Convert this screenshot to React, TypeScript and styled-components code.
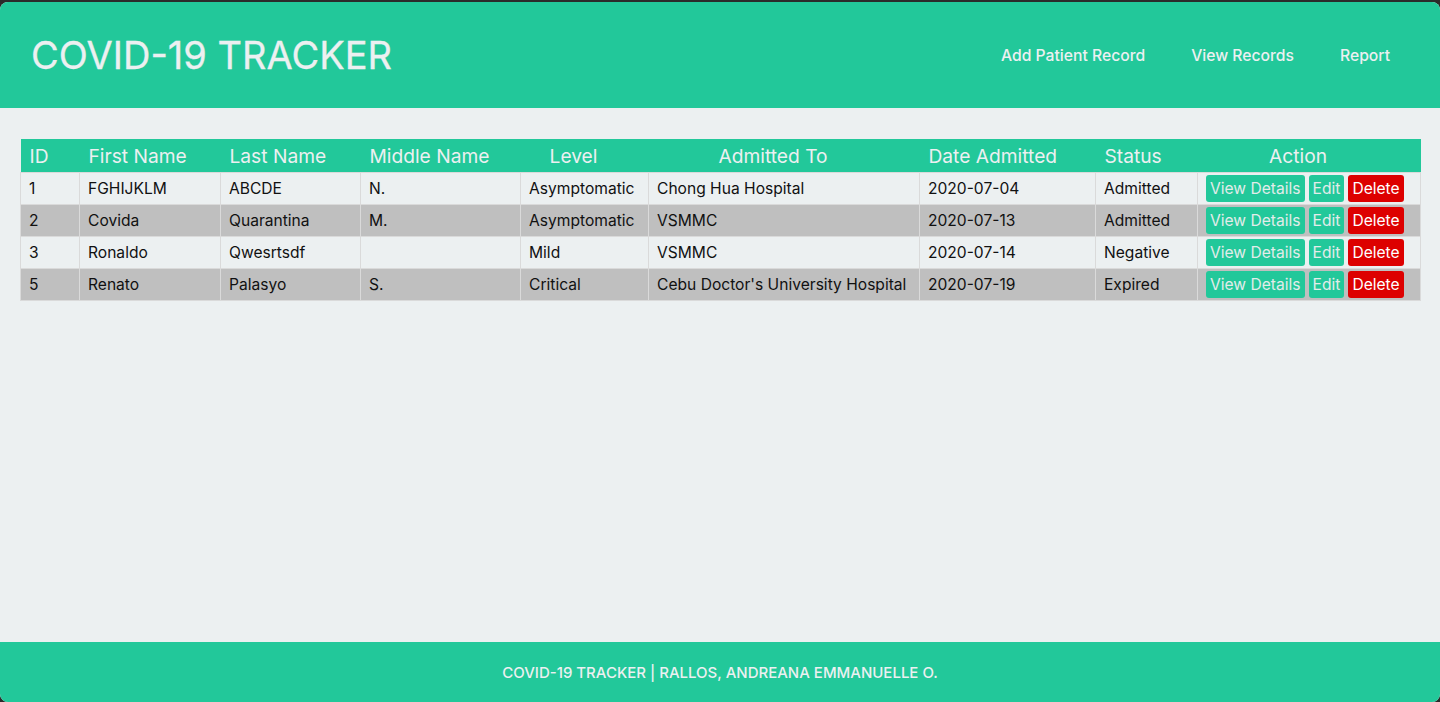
import React from "react";
import styled, { createGlobalStyle } from "styled-components";

const GREEN = "#22c89a";
const LIGHT = "#ecf0f1";

const Global = createGlobalStyle`
  html, body { margin: 0; padding: 0; background: #2b2b2b; }
  body { font-family: Inter, "Noto Sans", sans-serif; }
  * { box-sizing: border-box; }
`;

const Page = styled.div`
  margin-top: 2px;
  height: 700px;
  display: flex;
  flex-direction: column;
  background: ${LIGHT};
  border-radius: 8px;
  overflow: hidden;
`;

const Header = styled.header`
  height: 106px;
  flex: none;
  background: ${GREEN};
  display: flex;
  align-items: center;
  justify-content: space-between;
  padding: 0 50px 0 31px;
`;

const Title = styled.h1`
  margin: 0;
  font-size: 38px;
  font-weight: 400;
  color: ${LIGHT};
  -webkit-text-stroke: 0.3px ${LIGHT};
`;

const Nav = styled.nav`
  display: flex;
  gap: 46px;
`;

const NavLink = styled.a`
  color: ${LIGHT};
  font-size: 15.7px;
  font-weight: 500;
  text-decoration: none;
`;

const Main = styled.main`
  flex: 1;
  padding: 31px 20px 0;
`;

const Table = styled.table`
  width: 1400px;
  border-collapse: collapse;
  table-layout: fixed;
  font-size: 15.6px;
  color: #111;
`;

const Th = styled.th<{ $w: number; $center?: boolean }>`
  width: ${(p) => p.$w}px;
  height: 33px;
  background: ${GREEN};
  color: ${LIGHT};
  font-size: 19.2px;
  font-weight: 400;
  text-align: ${(p) => (p.$center ? "center" : "left")};
  padding: ${(p) => (p.$center ? "2px 22px 0 0" : "2px 0 0 9px")};
`;

const Tr = styled.tr<{ $alt: boolean }>`
  background: ${(p) => (p.$alt ? "#bfbfbf" : LIGHT)};
`;

const Td = styled.td`
  height: 32px;
  padding: 0 8px;
  border: 1px solid #dadada;
  white-space: nowrap;
  overflow: hidden;
`;

const Actions = styled.div`
  display: flex;
  gap: 4px;
`;

const Btn = styled.button<{ $danger?: boolean }>`
  height: 27px;
  padding: 0 4px;
  border: none;
  border-radius: 3px;
  font-family: inherit;
  font-size: 15.6px;
  color: ${(p) => (p.$danger ? "#fff" : "#e3ecea")};
  background: ${(p) => (p.$danger ? "#dd0000" : GREEN)};
  cursor: pointer;
`;

const Footer = styled.footer`
  height: 60px;
  flex: none;
  background: ${GREEN};
  display: flex;
  align-items: center;
  justify-content: center;
  color: ${LIGHT};
  font-size: 15px;
  font-weight: 500;
`;

const cols: { label: string; w: number; center?: boolean }[] = [
  { label: "ID", w: 59 },
  { label: "First Name", w: 141 },
  { label: "Last Name", w: 140 },
  { label: "Middle Name", w: 160 },
  { label: "Level", w: 128, center: true },
  { label: "Admitted To", w: 271, center: true },
  { label: "Date Admitted", w: 176 },
  { label: "Status", w: 102 },
  { label: "Action", w: 223, center: true },
];

const rows = [
  ["1", "FGHIJKLM", "ABCDE", "N.", "Asymptomatic", "Chong Hua Hospital", "2020-07-04", "Admitted"],
  ["2", "Covida", "Quarantina", "M.", "Asymptomatic", "VSMMC", "2020-07-13", "Admitted"],
  ["3", "Ronaldo", "Qwesrtsdf", "", "Mild", "VSMMC", "2020-07-14", "Negative"],
  ["5", "Renato", "Palasyo", "S.", "Critical", "Cebu Doctor's University Hospital", "2020-07-19", "Expired"],
];

export default function App() {
  return (
    <>
      <Global />
      <Page>
        <Header>
          <Title>COVID-19 TRACKER</Title>
          <Nav>
            <NavLink href="#">Add Patient Record</NavLink>
            <NavLink href="#">View Records</NavLink>
            <NavLink href="#">Report</NavLink>
          </Nav>
        </Header>
        <Main>
          <Table>
            <thead>
              <tr>
                {cols.map((c) => (
                  <Th key={c.label} $w={c.w} $center={c.center}>
                    {c.label}
                  </Th>
                ))}
              </tr>
            </thead>
            <tbody>
              {rows.map((r, i) => (
                <Tr key={r[0]} $alt={i % 2 === 1}>
                  {r.map((v, j) => (
                    <Td key={j}>{v}</Td>
                  ))}
                  <Td>
                    <Actions>
                      <Btn>View Details</Btn>
                      <Btn>Edit</Btn>
                      <Btn $danger>Delete</Btn>
                    </Actions>
                  </Td>
                </Tr>
              ))}
            </tbody>
          </Table>
        </Main>
        <Footer>COVID-19 TRACKER | RALLOS, ANDREANA EMMANUELLE O.</Footer>
      </Page>
    </>
  );
}
